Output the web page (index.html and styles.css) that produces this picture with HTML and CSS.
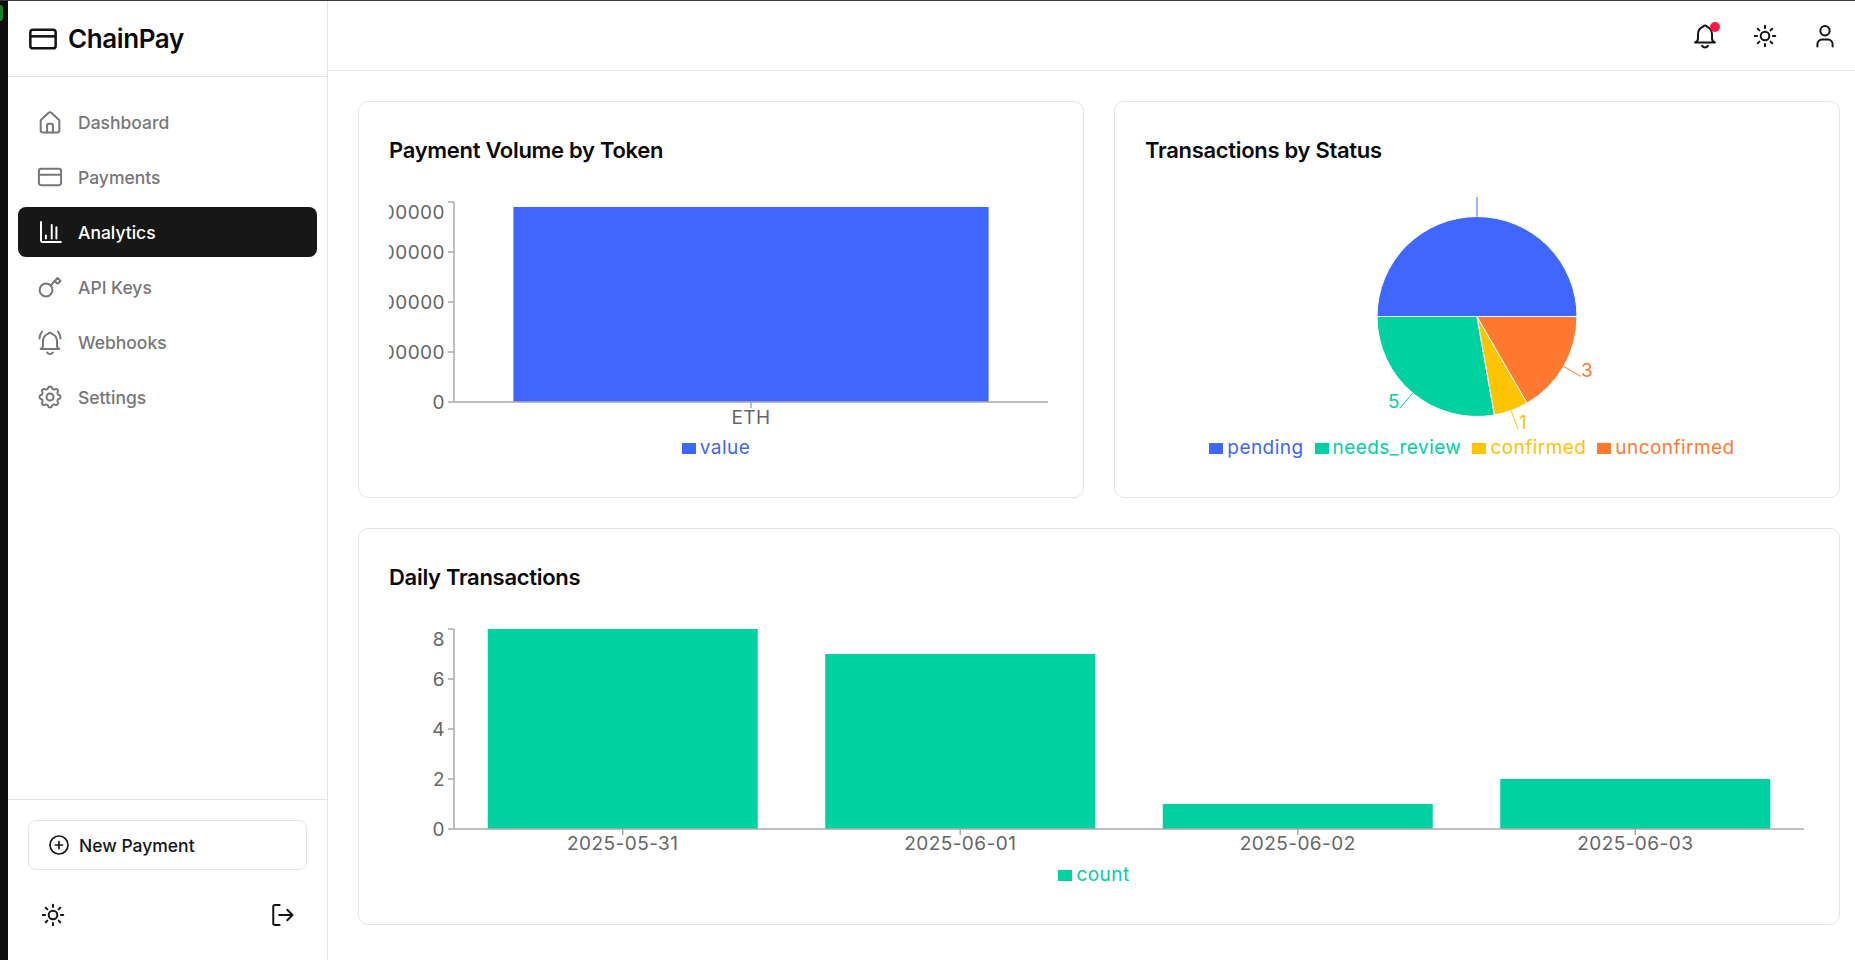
FILE: index.html
```html
<!DOCTYPE html>
<html lang="en">
<head>
    <meta charset="UTF-8">
    <meta name="viewport" content="width=device-width, initial-scale=1.0">
    <title>ChainPay - Analytics</title>
    <link rel="stylesheet" href="styles.css">
</head>
<body>
    <!-- shared icons -->
    <svg class="icon-defs" xmlns="http://www.w3.org/2000/svg">
        <symbol id="i-card" viewBox="0 0 24 24"><rect x="2.500" y="5" width="19" height="14" rx="2"/><path d="M2.500 10h19"/></symbol>
        <symbol id="i-home" viewBox="0 0 24 24"><path d="M4 10.500 10.600 4.300a2 2 0 0 1 2.800 0L20 10.500V19a2 2 0 0 1-2 2H6a2 2 0 0 1-2-2z"/><path d="M9.500 21v-6a1.500 1.500 0 0 1 1.500-1.500h2a1.500 1.500 0 0 1 1.500 1.500v6"/></symbol>
        <symbol id="i-chart" viewBox="0 0 24 24"><path d="M4.300 3.500v16a1 1 0 0 0 1 1h16"/><path d="M8.500 15v2.500M13.500 6v11.500M17.500 8v9.500"/></symbol>
        <symbol id="i-key" viewBox="0 0 24 24"><circle cx="8.600" cy="14.600" r="5.500"/><path d="M12.700 10.500 18.500 4.300 21 6.800 18.800 9M16 6.800l2 2"/></symbol>
        <symbol id="i-bell-ring" viewBox="0 0 24 24"><path d="M12 4a2 2 0 0 1 1.800 1.100 7 7 0 0 1 4.200 6.400V15a3 3 0 0 0 2 3H4a3 3 0 0 0 2-3v-3.500a7 7 0 0 1 4.200-6.400A2 2 0 0 1 12 4"/><path d="M9.500 21a3 3 0 0 0 5 0"/><path d="M3 9c0-2.200.8-4.200 2.200-6M21 9c0-2.200-.8-4.200-2.200-6"/></symbol>
        <symbol id="i-gear" viewBox="0 0 24 24"><path d="M10.325 4.317c.426-1.756 2.924-1.756 3.350 0a1.724 1.724 0 0 0 2.573 1.066c1.543-.94 3.310.826 2.370 2.370a1.724 1.724 0 0 0 1.065 2.572c1.756.426 1.756 2.924 0 3.350a1.724 1.724 0 0 0-1.066 2.573c.94 1.543-.826 3.310-2.370 2.370a1.724 1.724 0 0 0-2.572 1.065c-.426 1.756-2.924 1.756-3.350 0a1.724 1.724 0 0 0-2.573-1.066c-1.543.94-3.310-.826-2.370-2.370a1.724 1.724 0 0 0-1.065-2.572c-1.756-.426-1.756-2.924 0-3.350a1.724 1.724 0 0 0 1.066-2.573c-.94-1.543.826-3.310 2.370-2.370 1 .608 2.296.07 2.572-1.065z"/><circle cx="12" cy="12" r="3"/></symbol>
        <symbol id="i-sun" viewBox="0 0 24 24"><circle cx="12" cy="12" r="3.700"/><path d="M12 3.200v2M12 18.800v2M3.200 12h2M18.800 12h2M5.800 5.800l1.400 1.400M16.800 16.800l1.400 1.400M5.800 18.200l1.400-1.400M16.800 7.200l1.400-1.400"/></symbol>
        <symbol id="i-plus" viewBox="0 0 24 24"><circle cx="12" cy="12" r="9"/><path d="M8.500 12h7M12 8.500v7"/></symbol>
        <symbol id="i-logout" viewBox="0 0 24 24"><path d="M10 3.500H6a1.500 1.500 0 0 0-1.500 1.500v14A1.500 1.500 0 0 0 6 20.500h4"/><path d="M9.500 12H21M16.500 7.500 21 12l-4.500 4.500"/></symbol>
        <symbol id="i-bell" viewBox="0 0 24 24"><path d="M12 3a2 2 0 0 1 1.800 1.100 7 7 0 0 1 4.200 6.400V14a3.500 3.500 0 0 0 2.500 3.500h-17A3.500 3.500 0 0 0 6 14v-3.500a7 7 0 0 1 4.200-6.400A2 2 0 0 1 12 3"/><path d="M9.500 20.500a3 3 0 0 0 5 0"/></symbol>
        <symbol id="i-user" viewBox="0 0 24 24"><circle cx="12" cy="7.500" r="4"/><path d="M5.500 21v-2a4 4 0 0 1 4-4h5a4 4 0 0 1 4 4v2"/></symbol>
    </svg>

    <div class="edge"><span class="edge-dot"></span></div>

    <aside class="sidebar">
        <div class="brand">
            <svg class="brand-icon"><use href="#i-card"/></svg>
            <span class="brand-name">ChainPay</span>
        </div>

        <nav class="nav">
            <a class="nav-item"><svg class="icon"><use href="#i-home"/></svg>Dashboard</a>
            <a class="nav-item"><svg class="icon"><use href="#i-card"/></svg>Payments</a>
            <a class="nav-item active"><svg class="icon"><use href="#i-chart"/></svg>Analytics</a>
            <a class="nav-item"><svg class="icon"><use href="#i-key"/></svg>API Keys</a>
            <a class="nav-item"><svg class="icon"><use href="#i-bell-ring"/></svg>Webhooks</a>
            <a class="nav-item"><svg class="icon"><use href="#i-gear"/></svg>Settings</a>
        </nav>

        <div class="side-footer">
            <button class="new-payment"><svg class="icon-sm"><use href="#i-plus"/></svg>New Payment</button>
            <div class="side-actions">
                <svg class="icon dark"><use href="#i-sun"/></svg>
                <svg class="icon dark"><use href="#i-logout"/></svg>
            </div>
        </div>
    </aside>

    <div class="content">
        <header class="topbar">
            <span class="bell">
                <svg class="icon dark"><use href="#i-bell"/></svg>
                <span class="bell-dot"></span>
            </span>
            <svg class="icon dark"><use href="#i-sun"/></svg>
            <svg class="icon dark"><use href="#i-user"/></svg>
        </header>

        <main class="grid">
            <section class="card">
                <h2 class="card-title">Payment Volume by Token</h2>
                <svg class="chart" width="664" height="233">
                    <rect class="fill-blue" x="124.400" y="10" width="475.200" height="195"/>
                    <path class="axis" d="M65 5v200M65 205h594M59 5h6M59 55h6M59 105h6M59 155h6M59 205h6M362 205v6"/>
                    <text class="tick end" x="56" y="21.500">800000</text>
                    <text class="tick end" x="56" y="61.500">600000</text>
                    <text class="tick end" x="56" y="111.500">400000</text>
                    <text class="tick end" x="56" y="161.500">200000</text>
                    <text class="tick end" x="56" y="211.500">0</text>
                    <text class="tick mid" x="362" y="226.500">ETH</text>
                </svg>
                <div class="legend">
                    <span class="legend-item c-blue"><i class="swatch"></i>value</span>
                </div>
            </section>

            <section class="card">
                <h2 class="card-title">Transactions by Status</h2>
                <svg class="chart" width="664" height="233">
                    <path class="slice fill-blue" d="M432 119.500A100 100 0 0 0 232 119.500z"/>
                    <path class="slice fill-green" d="M232 119.500A100 100 0 0 0 349.400 217.980L332 119.500z"/>
                    <path class="slice fill-yellow" d="M349.400 217.980A100 100 0 0 0 382 206.100L332 119.500z"/>
                    <path class="slice fill-orange" d="M382 206.100A100 100 0 0 0 432 119.500H332z"/>
                    <path class="lead-blue" d="M332 19.500V-1"/>
                    <path class="lead-green" d="M267.700 196.100 254.900 211.400"/>
                    <path class="lead-yellow" d="M366.200 213.500 373 232.300"/>
                    <path class="lead-orange" d="M418.600 169.500 436 179.500"/>
                    <text class="pie-label end c-green-fill" x="255" y="211.400">5</text>
                    <text class="pie-label c-yellow-fill" x="374" y="232.300">1</text>
                    <text class="pie-label c-orange-fill" x="436" y="179.500">3</text>
                </svg>
                <div class="legend">
                    <span class="legend-item c-blue"><i class="swatch"></i>pending</span>
                    <span class="legend-item c-green"><i class="swatch"></i>needs_review</span>
                    <span class="legend-item c-yellow"><i class="swatch"></i>confirmed</span>
                    <span class="legend-item c-orange"><i class="swatch"></i>unconfirmed</span>
                </div>
            </section>

            <section class="card wide">
                <h2 class="card-title">Daily Transactions</h2>
                <svg class="chart" width="1421" height="233">
                    <rect class="fill-green" x="98.750" y="5" width="270" height="200"/>
                    <rect class="fill-green" x="436.250" y="30" width="270" height="175"/>
                    <rect class="fill-green" x="773.750" y="180" width="270" height="25"/>
                    <rect class="fill-green" x="1111.250" y="155" width="270" height="50"/>
                    <path class="axis" d="M65 5v200M65 205h1350M59 5h6M59 55h6M59 105h6M59 155h6M59 205h6M233.750 205v6M571.250 205v6M908.750 205v6M1246.250 205v6"/>
                    <text class="tick end" x="56" y="21.500">8</text>
                    <text class="tick end" x="56" y="61.500">6</text>
                    <text class="tick end" x="56" y="111.500">4</text>
                    <text class="tick end" x="56" y="161.500">2</text>
                    <text class="tick end" x="56" y="211.500">0</text>
                    <text class="tick mid" x="233.750" y="226">2025-05-31</text>
                    <text class="tick mid" x="571.250" y="226">2025-06-01</text>
                    <text class="tick mid" x="908.750" y="226">2025-06-02</text>
                    <text class="tick mid" x="1246.250" y="226">2025-06-03</text>
                </svg>
                <div class="legend">
                    <span class="legend-item c-green"><i class="swatch"></i>count</span>
                </div>
            </section>
        </main>
    </div>
</body>
</html>
```

FILE: styles.css
```css
* {
    box-sizing: border-box;
}
body {
    margin: 0;
    height: 960px;
    display: flex;
    overflow: hidden;
    border-top: 1px solid #3a3a3a;
    background-color: #fff;
    font-family: Inter, "Noto Sans", sans-serif;
    color: #0a0a0a;
}
.icon-defs {
    display: none;
}
.edge {
    width: 8px;
    flex-shrink: 0;
    background-color: #0d0d0d;
}
.edge-dot {
    display: block;
    width: 3px;
    height: 16px;
    margin-top: 4px;
    border-radius: 0 3px 3px 0;
    background-color: #1a7f2a;
}

/* sidebar */
.sidebar {
    width: 320px;
    flex-shrink: 0;
    display: flex;
    flex-direction: column;
    border-right: 1px solid #e5e5e5;
}
.brand {
    height: 76px;
    display: flex;
    align-items: center;
    gap: 9px;
    padding: 0 19px;
    border-bottom: 1px solid #e5e5e5;
}
.brand-icon {
    width: 32px;
    height: 32px;
    fill: none;
    stroke: #141414;
    stroke-width: 1.9;
}
.brand-name {
    font-size: 26px;
    font-weight: 600;
    letter-spacing: -0.4px;
}
.nav {
    flex: 1;
    display: flex;
    flex-direction: column;
    gap: 5px;
    padding: 20px 10px;
}
.nav-item {
    height: 50px;
    display: flex;
    align-items: center;
    gap: 14px;
    padding: 1px 18px 0;
    border-radius: 8px;
    font-size: 17.5px;
    font-weight: 500;
    color: #777;
}
.nav-item.active {
    background-color: #171717;
    color: #fff;
}
.nav-item .icon {
    margin-top: -1px;
}
.icon {
    width: 28px;
    height: 28px;
    flex-shrink: 0;
    fill: none;
    stroke: currentColor;
    stroke-width: 1.7;
    stroke-linecap: round;
    stroke-linejoin: round;
}
.icon.dark {
    color: #141414;
}
.icon-sm {
    width: 24px;
    height: 24px;
    flex-shrink: 0;
    fill: none;
    stroke: currentColor;
    stroke-width: 1.7;
    stroke-linecap: round;
}
.side-footer {
    height: 161px;
    padding: 20px 20px 0;
    border-top: 1px solid #e5e5e5;
}
.new-payment {
    width: 100%;
    height: 50px;
    display: flex;
    align-items: center;
    gap: 8px;
    padding: 0 18px;
    border: 1px solid #e5e5e5;
    border-radius: 8px;
    background-color: #fff;
    font-family: inherit;
    font-size: 17.5px;
    font-weight: 500;
    color: #171717;
}
.side-actions {
    display: flex;
    justify-content: space-between;
    padding: 31px 11px 0;
}

/* top bar and cards */
.content {
    flex: 1;
    min-width: 0;
}
.topbar {
    height: 70px;
    display: flex;
    align-items: center;
    justify-content: flex-end;
    gap: 32px;
    padding: 0 16px 0 0;
    border-bottom: 1px solid #e5e5e5;
}
.bell {
    position: relative;
    display: flex;
}
.bell-dot {
    position: absolute;
    top: 0;
    right: -1px;
    width: 10px;
    height: 10px;
    border-radius: 50%;
    background-color: #ff1744;
}
.grid {
    display: grid;
    grid-template-columns: 726px 726px;
    gap: 30px;
    padding: 30px 0 0 30px;
}
.card {
    height: 397px;
    padding: 30px;
    border: 1px solid #e5e5e5;
    border-radius: 10px;
}
.card.wide {
    grid-column: span 2;
}
.card-title {
    margin: 0 0 29px;
    font-size: 22px;
    line-height: 36px;
    font-weight: 600;
    letter-spacing: -0.3px;
}
.chart {
    display: block;
}

/* chart parts */
.axis {
    fill: none;
    stroke: #aaa;
    stroke-width: 1.5;
}
.tick, .pie-label {
    font-size: 19px;
    letter-spacing: 0.45px;
}
.tick {
    fill: #666;
}
.end {
    text-anchor: end;
}
.mid {
    text-anchor: middle;
}
.slice {
    stroke: #fff;
    stroke-width: 1;
}
.fill-blue {
    fill: #3f66ff;
}
.fill-green {
    fill: #00d1a0;
}
.fill-yellow {
    fill: #ffc400;
}
.fill-orange {
    fill: #ff7a30;
}
.lead-blue, .lead-green, .lead-yellow, .lead-orange {
    fill: none;
    stroke-width: 1;
}
.lead-blue {
    stroke: #3f66ff;
}
.lead-green {
    stroke: #00d1a0;
}
.lead-yellow {
    stroke: #ffc400;
}
.lead-orange {
    stroke: #ff7a30;
}
.c-green-fill {
    fill: #00d1a0;
}
.c-yellow-fill {
    fill: #ffc400;
}
.c-orange-fill {
    fill: #ff7a30;
}
.legend {
    display: flex;
    justify-content: center;
    gap: 11px;
    padding: 6px 10px 0 0;
    font-size: 19px;
    letter-spacing: 0.45px;
    line-height: 24px;
}
.legend-item {
    display: flex;
    align-items: center;
    gap: 4px;
}
.swatch {
    width: 14px;
    height: 11px;
    background-color: currentColor;
}
.c-blue {
    color: #3f66ff;
}
.c-green {
    color: #00d1a0;
}
.c-yellow {
    color: #ffc400;
}
.c-orange {
    color: #ff7a30;
}
```
